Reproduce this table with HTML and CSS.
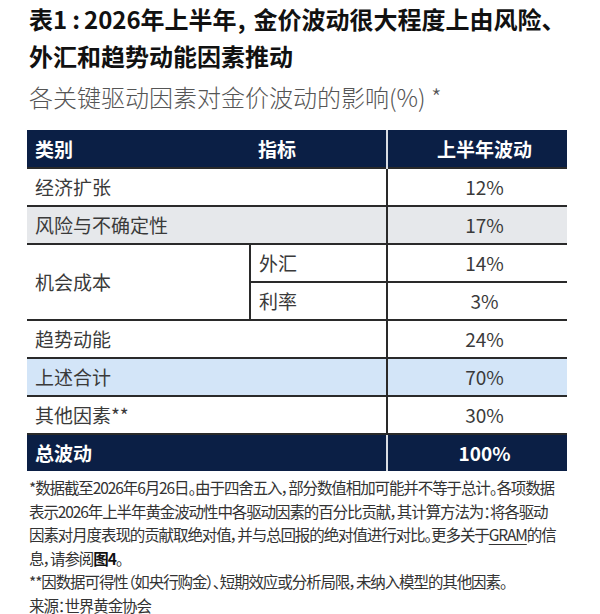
FILE: index.html
```html
<!DOCTYPE html>
<html lang="zh-CN">
<head>
<meta charset="utf-8">
<title>表1</title>
<link rel="stylesheet" href="styles.css">
</head>
<body>
<div class="page">
  <h1 class="title"><span class="tline">表1<span class="colon">:</span>2026年上半年<span class="comma">,</span>金价波动很大程度上由风险、</span><span class="tline">外汇和趋势动能因素推动</span></h1>
  <p class="subtitle">各关键驱动因素对金价波动的影响(%) *</p>
  <table class="grid">
    <colgroup><col class="c1"><col class="c2"><col class="c3"></colgroup>
    <thead>
      <tr class="head">
        <th class="cat">类别</th>
        <th class="ind">指标</th>
        <th class="val">上半年波动</th>
      </tr>
    </thead>
    <tbody>
      <tr><td colspan="2">经济扩张</td><td class="num">12%</td></tr>
      <tr class="grey"><td colspan="2">风险与不确定性</td><td class="num">17%</td></tr>
      <tr><td rowspan="2" class="span">机会成本</td><td class="sub">外汇</td><td class="num">14%</td></tr>
      <tr><td class="sub">利率</td><td class="num">3%</td></tr>
      <tr><td colspan="2">趋势动能</td><td class="num">24%</td></tr>
      <tr class="blue"><td colspan="2">上述合计</td><td class="num">70%</td></tr>
      <tr><td colspan="2">其他因素**</td><td class="num">30%</td></tr>
      <tr class="total"><td colspan="2">总波动</td><td class="num">100%</td></tr>
    </tbody>
  </table>
  <div class="notes">
    <span class="nline">*数据截至2026年6月26日。由于四舍五入，部分数值相加可能并不等于总计。各项数据</span>
    <span class="nline">表示2026年上半年黄金波动性中各驱动因素的百分比贡献，其计算方法为：将各驱动</span>
    <span class="nline">因素对月度表现的贡献取绝对值，并与总回报的绝对值进行对比。更多关于<span class="link">GRAM</span>的信</span>
    <span class="nline">息，请参阅<b class="ref">图4</b>。</span>
    <span class="nline">**因数据可得性（如央行购金）、短期效应或分析局限，未纳入模型的其他因素。</span>
    <span class="nline">来源：世界黄金协会</span>
  </div>
</div>
</body>
</html>
```

FILE: styles.css
```css
html, body {
  margin: 0;
  padding: 0;
  background: #ffffff;
}

.page {
  font-family: "Noto Sans CJK SC", "Noto Sans", sans-serif;
  color: #222;
  width: 600px;
}

.title {
  margin: 0;
  padding: 0 0 0 29px;
  font-size: 24px;
  font-weight: 700;
  line-height: 37px;
  color: #111;
}

.tline {
  display: block;
  white-space: nowrap;
}

.colon {
  padding: 0 4px 0 5px;
}

.comma {
  padding: 0 8px 0 1px;
}

.subtitle {
  margin: 8px 0 0 0;
  padding-left: 29px;
  font-size: 24px;
  font-weight: 300;
  line-height: 30px;
  color: #555;
}

.grid {
  margin: 18px 0 0 27px;
  width: 540px;
  border-collapse: collapse;
  table-layout: fixed;
  font-size: 19px;
}

.c1 { width: 223px; }
.c2 { width: 137px; }
.c3 { width: 180px; }

.grid th,
.grid td {
  height: 36px;
  padding: 0 0 0 8px;
  text-align: left;
  vertical-align: middle;
  line-height: 24px;
  border-top: 2px solid #2a2a2a;
  white-space: nowrap;
}

.grid td {
  color: #3a3a3a;
  font-weight: 400;
}

.grid .num,
.grid .val {
  text-align: center;
  padding-left: 14px;
  border-left: 2px solid #2a2a2a;
}

.grid .sub {
  border-left: 2px solid #2a2a2a;
}

.head th {
  background: #0b1f45;
  color: #ffffff;
  font-weight: 700;
  height: 37px;
  border-top: none;
}

.head .val {
  border-left: 2px solid #d9dde3;
}

.grey td { background: #e6e8eb; }
.blue td { background: #d3e5f8; }

.total td {
  background: #0b1f45;
  color: #ffffff;
  font-weight: 700;
  border-top: 2px solid #2a2a2a;
}

.total .num {
  border-left: 2px solid #d9dde3;
}

.notes {
  margin: 5px 0 0 29px;
  font-size: 15.5px;
  line-height: 23.5px;
  letter-spacing: -1.1px;
  font-feature-settings: "palt";
  color: #333;
}

.nline {
  display: block;
  white-space: nowrap;
}

.link {
  text-decoration: underline;
  text-underline-offset: 3px;
}

.ref {
  font-weight: 700;
  color: #111;
}
```
